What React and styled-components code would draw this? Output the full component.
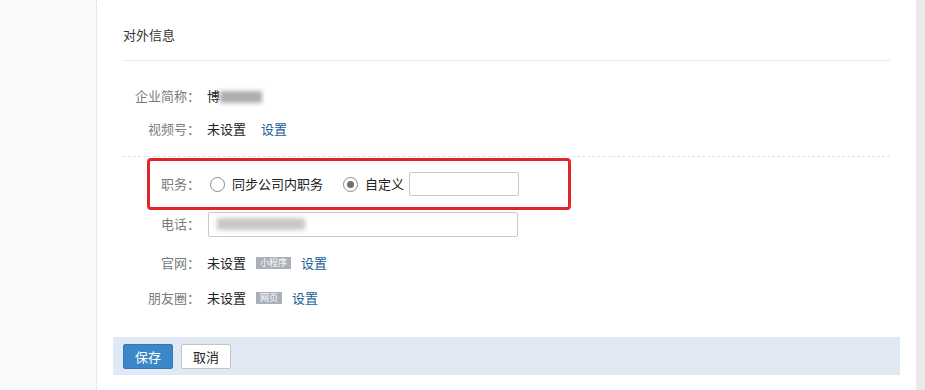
import React from "react";
import styled, { createGlobalStyle, css } from "styled-components";

const Global = createGlobalStyle`
  html, body {
    margin: 0;
    padding: 0;
    background: #f7f9fb;
  }
  body {
    font-family: "Microsoft YaHei", "Noto Sans CJK SC", sans-serif;
    font-size: 13px;
    color: #222;
  }
`;

const Page = styled.div`
  display: flex;
  width: 925px;
  height: 390px;
  overflow: hidden;
`;

const Side = styled.div`
  width: 96px;
  flex: none;
  background: #f7f9fb;
  border-right: 1px dotted #d6d9dd;
`;

const Panel = styled.div`
  width: 819px;
  flex: none;
  background: #fff;
  display: flex;
  flex-direction: column;
`;

const Scroll = styled.div`
  flex: 1;
  background: #eaeaea;
`;

const Header = styled.div`
  margin: 0 26px;
  padding: 25px 0 15px;
  line-height: 20px;
  color: #333;
  border-bottom: 1px solid #e6eaee;
`;

const Section = styled.div`
  position: relative;
  margin: 0 26px;
  ${({ $dashed }) =>
    $dashed &&
    css`
      border-bottom: 1px dashed #e2e2e2;
    `}
`;

const Row = styled.div`
  display: flex;
  align-items: center;
  height: ${({ $h }) => $h}px;
  line-height: 20px;
`;

const Label = styled.div`
  width: 77px;
  flex: none;
  text-align: right;
  color: #7b7b7b;
  margin-right: 7px;
`;

const Value = styled.span`
  color: #222;
  white-space: nowrap;
`;

const Link = styled.a`
  color: #1d5c97;
  cursor: pointer;
  margin-left: ${({ $ml }) => $ml || 0}px;
`;

const Tag = styled.span`
  display: inline-block;
  margin-left: 10px;
  height: 12px;
  line-height: 12px;
  padding: 0 4px;
  font-size: 9px;
  color: #fff;
  background: #a9b0ba;
`;

const Blur = styled.span`
  display: inline-block;
  width: ${({ $w }) => $w}px;
  height: 12px;
  background: ${({ $c }) => $c || "#adadad"};
  filter: blur(2px);
  vertical-align: middle;
`;

const Radio = styled.span`
  display: inline-block;
  position: relative;
  flex: none;
  width: 13px;
  height: 13px;
  border: 1px solid #8a8a8a;
  border-radius: 50%;
  margin: 0 7px 0 3px;
  ${({ $checked }) =>
    $checked &&
    css`
      &::after {
        content: "";
        position: absolute;
        left: 3px;
        top: 3px;
        width: 7px;
        height: 7px;
        border-radius: 50%;
        background: #6f6f6f;
      }
    `}
`;

const Option = styled.label`
  display: inline-flex;
  align-items: center;
  margin-right: 17px;
  color: #222;
  &:last-of-type {
    margin-right: 5px;
  }
`;

const Input = styled.div`
  box-sizing: border-box;
  flex: none;
  width: ${({ $w }) => $w}px;
  height: ${({ $h }) => $h || 24}px;
  margin-left: ${({ $ml }) => $ml || 0}px;
  border: 1px solid #c9c9c9;
  border-radius: 2px;
  background: #fff;
  display: flex;
  align-items: center;
  padding-left: 8px;
`;

const Mark = styled.div`
  position: absolute;
  left: 24px;
  top: 1px;
  width: 424px;
  height: 52px;
  box-sizing: border-box;
  border: 3px solid #e3242b;
  border-radius: 4px;
  pointer-events: none;
`;

const Footer = styled.div`
  margin: 22px 16px 0;
  height: 38px;
  background: #e1e9f4;
  display: flex;
  align-items: center;
  gap: 8px;
  padding-left: 10px;
`;

const Button = styled.button`
  width: 50px;
  height: 25px;
  padding: 0;
  font-family: inherit;
  font-size: 13px;
  border-radius: 2px;
  border: 1px solid #c4c4c4;
  background: #fff;
  color: #222;
  ${({ $primary }) =>
    $primary &&
    css`
      background: #3b87c8;
      border-color: #2f78b9;
      color: #fff;
    `}
`;

export default function App() {
  return (
    <>
      <Global />
      <Page>
        <Side />
        <Panel>
          <Header>对外信息</Header>
          <Section $dashed style={{ paddingTop: 18, paddingBottom: 11 }}>
            <Row $h={33}>
              <Label>企业简称：</Label>
              <Value>
                博<Blur $w={42} />
              </Value>
            </Row>
            <Row $h={33}>
              <Label>视频号：</Label>
              <Value>未设置</Value>
              <Link $ml={15}>设置</Link>
            </Row>
          </Section>
          <Section style={{ paddingTop: 7 }}>
            <Mark />
            <Row $h={40}>
              <Label>职务：</Label>
              <Option>
                <Radio />
                同步公司内职务
              </Option>
              <Option>
                <Radio $checked />
                自定义
              </Option>
              <Input $w={110} />
            </Row>
            <Row $h={40}>
              <Label>电话：</Label>
              <Input $w={310} $h={25} $ml={1}>
                <Blur $w={88} $c="#c8c8c8" />
              </Input>
            </Row>
            <Row $h={37}>
              <Label>官网：</Label>
              <Value>未设置</Value>
              <Tag>小程序</Tag>
              <Link $ml={10}>设置</Link>
            </Row>
            <Row $h={34}>
              <Label>朋友圈：</Label>
              <Value>未设置</Value>
              <Tag>网页</Tag>
              <Link $ml={10}>设置</Link>
            </Row>
          </Section>
          <Footer>
            <Button $primary>保存</Button>
            <Button>取消</Button>
          </Footer>
        </Panel>
        <Scroll />
      </Page>
    </>
  );
}
